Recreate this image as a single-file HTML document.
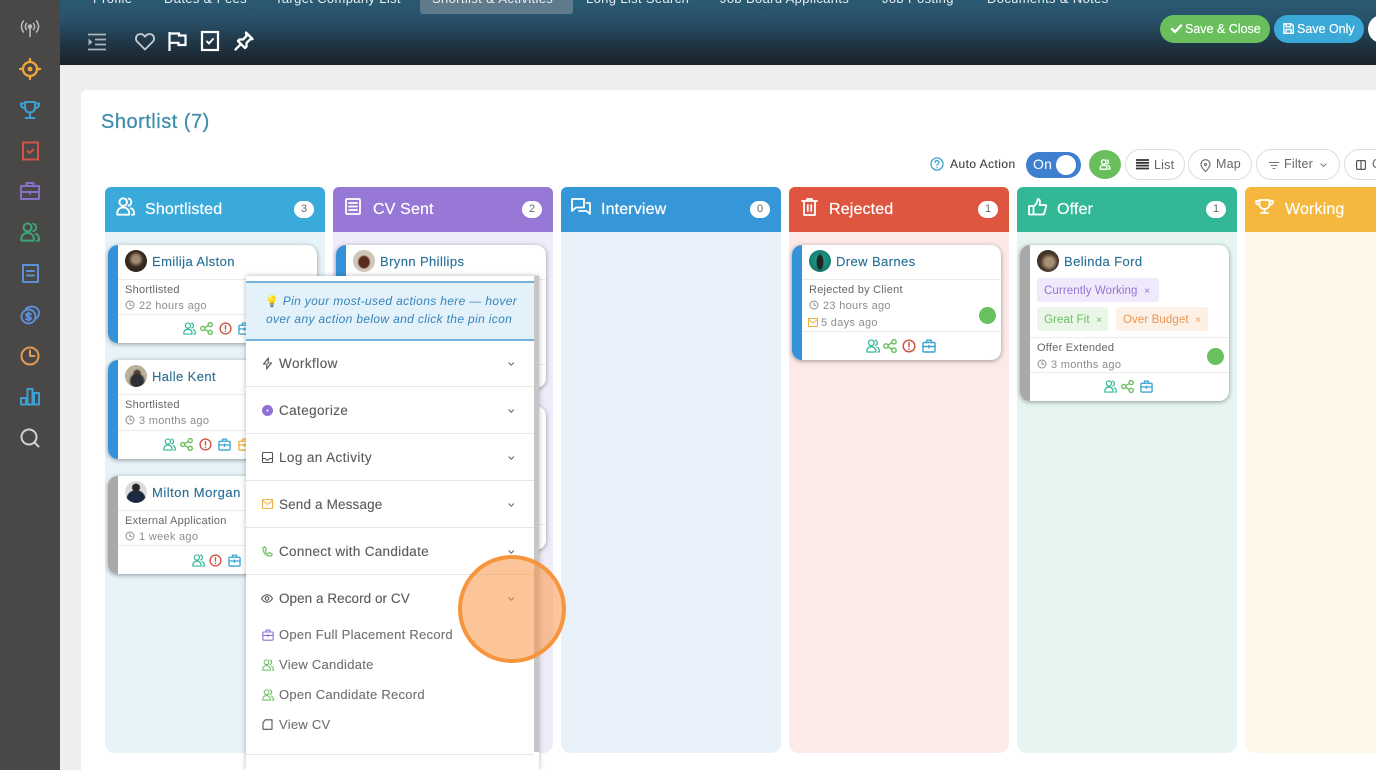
<!DOCTYPE html>
<html lang="en">
<head>
<meta charset="utf-8">
<title>Shortlist</title>
<style>
*{box-sizing:border-box}
html,body{margin:0;padding:0;width:1376px;height:770px;overflow:hidden;background:#eeeeee;font-family:"Liberation Sans",Arial,sans-serif;color:#555}
#wrap{position:relative;width:1376px;height:770px;overflow:hidden;background:#eee}
.a{position:absolute}
.t{position:absolute;white-space:nowrap}
svg{position:absolute;overflow:visible;fill:none;stroke-linecap:round;stroke-linejoin:round}
#side{left:0;top:0;width:60px;height:770px;background:#4a4846}
#top{left:60px;top:0;width:1316px;height:65px;background:linear-gradient(180deg,#2a5b73 0%,#28516a 30%,#1f3442 70%,#1b2229 100%)}
.tab{position:absolute;top:-9px;font-size:13px;letter-spacing:.35px;color:#e9eef1;white-space:nowrap;line-height:15px}
.btn{position:absolute;top:15px;height:28px;border-radius:14px;color:#fff;font-size:12.5px;line-height:28px;white-space:nowrap;-webkit-text-stroke:.15px #fff}
#panel{left:81px;top:90px;width:1295px;height:680px;background:#fff;border-radius:6px 0 0 0}
.pill{position:absolute;top:149px;height:31px;border:1px solid #dcdcdc;border-radius:16px;background:#fff;font-size:12.5px;line-height:28px;color:#666;letter-spacing:.2px}
.col{position:absolute;top:187px;width:220px;height:566px;border-radius:6px 6px 10px 10px;overflow:hidden}
.hd{position:absolute;left:0;top:0;width:100%;height:45px;color:#fff;font-size:16px;line-height:46px;letter-spacing:.15px;-webkit-text-stroke:.2px #fff}
.hd span.n{position:absolute;left:40px;top:0}
.bdg{position:absolute;top:14px;left:189px;width:20px;height:17px;border-radius:9px;background:#fff;color:#666;font-size:11px;line-height:17px;text-align:center;letter-spacing:0;-webkit-text-stroke:0}
.card{position:absolute;width:209px;background:#fff;border-radius:10px;box-shadow:0 1px 5px rgba(0,0,0,.38);overflow:hidden}
.bar{position:absolute;left:0;top:0;bottom:0;width:10px}
.av{position:absolute;left:17px;top:5px;width:22px;height:22px;border-radius:50%;overflow:hidden}
.nm{position:absolute;left:44px;top:7.500px;font-size:13px;line-height:18px;color:#2b7196;letter-spacing:.4px;white-space:nowrap;-webkit-text-stroke:.15px #2b7196}
.ln{position:absolute;left:10px;right:0;height:1px;background:#ececec}
.s1{position:absolute;left:17px;margin-top:1px;font-size:11px;line-height:14px;color:#666;letter-spacing:.25px;white-space:nowrap}
.s2{position:absolute;left:31px;margin-top:1px;font-size:11px;line-height:14px;color:#8d8d8d;letter-spacing:.3px;white-space:nowrap}
.dot{position:absolute;width:17px;height:17px;border-radius:50%;background:#68c05e}
.tag{position:absolute;height:24px;border-radius:3px;font-size:11.5px;line-height:26px;padding-left:7px;letter-spacing:.1px;white-space:nowrap}
#pop{left:246px;top:276px;width:293px;height:494px;background:#fff;box-shadow:0 0 5px rgba(0,0,0,.28)}
#tip{position:absolute;left:0;top:5px;width:288px;height:60px;background:#e3f1fb;border-top:2px solid #74b3d8;border-bottom:2px solid #74b3d8;color:#3584b8;font-style:italic;font-size:12px;letter-spacing:.35px;line-height:18px}
#sb{position:absolute;left:288px;top:0;width:5px;height:476px;background:#c6c6c6}
.dv{position:absolute;left:0;width:288px;height:1px;background:#e6e6e6}
.it{position:absolute;left:33px;margin-top:1px;font-size:13.5px;line-height:16px;color:#5a5a5a;letter-spacing:.25px;white-space:nowrap;-webkit-text-stroke:.12px #5a5a5a}
.sub{color:#6e6e6e;font-size:13px;letter-spacing:.27px;-webkit-text-stroke:.1px #6e6e6e}
#circ{left:458px;top:555px;width:108px;height:108px;border-radius:50%;border:4px solid #f7953c;background:rgba(250,150,70,.55)}
</style>
</head>
<body>
<div id="wrap">
<svg width="0" height="0" style="position:absolute">
<defs>
<symbol id="ppl" viewBox="0 0 14 14"><circle cx="5.300" cy="3.800" r="2.800"/><path d="M1 13c-.6-3 1.300-5.300 4.300-5.300S10.200 10 9.600 13z"/><path d="M9.300 1.200a2.700 2.700 0 0 1 0 5.200M11 8.300c1.700.7 2.500 2.500 2.200 4.700h-1.400"/></symbol>
<symbol id="shr" viewBox="0 0 14 14"><circle cx="3" cy="7" r="2.200"/><circle cx="11" cy="2.800" r="2.200"/><circle cx="11" cy="11.200" r="2.200"/><path d="M5 6l4-2.200M5 8l4 2.200"/></symbol>
<symbol id="exc" viewBox="0 0 14 14"><circle cx="7" cy="7" r="5.800"/><path d="M7 3.800v3.800M7 10v.2"/></symbol>
<symbol id="brf" viewBox="0 0 14 14"><rect x="1" y="3.500" width="12" height="9.500" rx="1"/><path d="M4.800 3.500V1.200h4.400v2.300M1 7.500h12M7 6.500v2.500"/></symbol>
<symbol id="clk" viewBox="0 0 10 10"><circle cx="5" cy="5" r="4"/><path d="M5 2.800V5l1.800.6"/></symbol>
<symbol id="chv" viewBox="0 0 8 5"><path d="M1 1l3 3 3-3"/></symbol>
</defs>
</svg>

<div id="top" class="a"></div>
<div class="a" style="left:420px;top:0;width:153px;height:14px;background:#5f7b8b;border-radius:0 0 3px 3px"></div>
<div class="tab" style="left:93px">Profile</div>
<div class="tab" style="left:164px">Dates &amp; Fees</div>
<div class="tab" style="left:275px">Target Company List</div>
<div class="tab" style="left:432px">Shortlist &amp; Activities</div>
<div class="tab" style="left:586px">Long List Search</div>
<div class="tab" style="left:720px">Job Board Applicants</div>
<div class="tab" style="left:882px">Job Posting</div>
<div class="tab" style="left:987px">Documents &amp; Notes</div>

<svg style="left:87px;top:33px" width="20" height="18" stroke="#aeb5b9" stroke-width="1.800"><path d="M1 1.500h18M8 6.500h11M8 11.500h11M1 16.500h18" stroke-linecap="butt"/><path d="M1.500 5.500l4 3.500-4 3.500z" fill="#aeb5b9" stroke="none"/></svg>
<svg style="left:135px;top:32px" width="20" height="19" stroke="#c9cdcf" stroke-width="1.800"><path d="M10 17.500L2.300 9.800C.2 7.700.7 4.300 2.800 2.800c2.300-1.600 5.400-.8 7.200 1.800 1.800-2.600 4.900-3.400 7.200-1.800 2.100 1.500 2.600 4.900.5 7z"/></svg>
<svg style="left:168px;top:32px" width="19" height="19" stroke="#fff" stroke-width="2.200"><path d="M1.500 0v19M1.500 1.500h9.500v2h6.500v9.500h-7v-2.200H1.500" stroke-linecap="butt" stroke-linejoin="miter"/></svg>
<svg style="left:201px;top:31px" width="18" height="20" stroke="#fff" stroke-width="2.200"><rect x="1" y="1" width="16" height="18" stroke-linejoin="miter"/><path d="M6 10.500l2 2 4-4.500" stroke-width="2"/></svg>
<svg style="left:234px;top:31px" width="20" height="20" stroke="#fff" stroke-width="2.300"><path d="M12 1.500l6.500 6.500-2.500.5-3.500 3.500v3.500l-1.500 1.500-7-7 1.500-1.500h3.500l3.500-3.500z"/><path d="M6.500 13.500l-5 5"/></svg>

<div class="btn" style="left:1160px;width:110px;background:#68bf5c;padding-left:25px">Save &amp; Close</div>
<svg style="left:1171px;top:24px" width="11" height="10" stroke="#fff" stroke-width="2.400"><path d="M1 5l3 3 6-6.500"/></svg>
<div class="btn" style="left:1274px;width:90px;background:#3aa9d8;padding-left:23px">Save Only</div>
<svg style="left:1283px;top:23px" width="11" height="11" stroke="#fff" stroke-width="1.400"><path d="M.8.800h7.500l2 2v7.500H.8zM3 .8v3h4.500v-3M3 10.300V6.500h5v3.800"/></svg>
<div class="a" style="left:1368px;top:15px;width:28px;height:28px;border-radius:50%;background:#fff"></div>

<div id="panel" class="a"></div>
<div class="t" style="left:101px;top:110px;font-size:20px;line-height:25px;color:#3d8cab;letter-spacing:.5px;-webkit-text-stroke:.25px #3d8cab">Shortlist (7)</div>

<!-- sidebar -->
<div id="side" class="a"></div>
<svg style="left:20px;top:19px" width="20" height="19" stroke="#b9b9b9" stroke-width="1.600"><circle cx="10" cy="7.500" r="1.500" fill="#b9b9b9"/><path d="M10 9v8.500M6.500 4.500a4.500 4.500 0 0 0 0 6M13.500 4.500a4.500 4.500 0 0 1 0 6M3.500 2a8.500 8.500 0 0 0 0 11M16.500 2a8.500 8.500 0 0 1 0 11"/></svg>
<svg style="left:20px;top:59px" width="20" height="20" stroke="#efa93a" stroke-width="2.300"><circle cx="10" cy="10" r="7"/><circle cx="10" cy="10" r="2.400" fill="#efa93a" stroke="none"/><path d="M10 0v3M10 17v3M0 10h3M17 10h3"/></svg>
<svg style="left:20px;top:101px" width="20" height="18" stroke="#3e9fd3" stroke-width="2"><path d="M5 1h10v5.500c0 3-2.200 5-5 5s-5-2-5-5zM5 2.500H.8c0 3 1.500 4.500 4.200 4.800M15 2.500h4.200c0 3-1.500 4.500-4.200 4.800M10 11.500v5M5.500 17h9"/></svg>
<svg style="left:22px;top:141px" width="17" height="20" stroke="#cf5444" stroke-width="2"><rect x="1" y="1.500" width="15" height="17" stroke-linejoin="miter"/><path d="M5.500 10l2 2 4-3.500"/></svg>
<svg style="left:20px;top:182px" width="20" height="18" stroke="#8a6fc9" stroke-width="2"><rect x="1" y="4" width="18" height="13"/><path d="M6.500 4V1h7v3M1 10h18M10 9.500v2"/></svg>
<svg style="left:20px;top:222px" width="20" height="20" stroke="#3ea57a" stroke-width="1.400"><use href="#ppl" width="20" height="20"/></svg>
<svg style="left:22px;top:264px" width="17" height="19" stroke="#5b8fd6" stroke-width="2"><rect x="1" y="1" width="15" height="17"/><path d="M5 7h7M5 11.500h7"/></svg>
<svg style="left:20px;top:305px" width="20" height="20" stroke="#5b8fd6" stroke-width="1.900"><circle cx="8.500" cy="11.500" r="7"/><path d="M6 3.500C10 .5 15.500 1 18 4.500c2 3 1 7-2 9"/><path d="M11 9.500c-1-1.300-4.800-1.300-4.800.6 0 2.300 4.800 1 4.800 3.300 0 1.700-3.700 1.700-5 .5M8.500 7.500v8"/></svg>
<svg style="left:20px;top:346px" width="20" height="20" stroke="#e39a55" stroke-width="2"><circle cx="10" cy="10" r="8.500"/><path d="M10 4.500V10h4.500"/></svg>
<svg style="left:20px;top:388px" width="20" height="18" stroke="#3e9fd3" stroke-width="2" stroke-linejoin="miter"><rect x="1" y="10" width="5" height="6.500"/><rect x="7.500" y="1" width="5" height="15.500"/><rect x="14" y="5" width="5" height="11.500"/></svg>
<svg style="left:20px;top:428px" width="20" height="20" stroke="#d2d2d2" stroke-width="2"><circle cx="9" cy="9" r="7.500"/><path d="M14.500 14.500l4 4"/></svg>

<!-- toolbar -->
<svg style="left:930px;top:157px" width="14" height="14" stroke="#3fa3c8" stroke-width="1.300"><circle cx="7" cy="7" r="6"/><path d="M5 5.500c0-2.700 4-2.500 4 0 0 1.500-2 1.500-2 3M7 10.500v.1"/></svg>
<div class="t" style="left:950px;top:156px;font-size:12px;line-height:16px;color:#3c3c3c;letter-spacing:.45px;-webkit-text-stroke:.1px #3c3c3c">Auto Action</div>
<div class="a" style="left:1026px;top:152px;width:55px;height:26px;border-radius:13px;background:#3f7fd0"></div>
<div class="t" style="left:1033px;top:155px;font-size:14px;line-height:18px;color:#fff;letter-spacing:.2px">On</div>
<div class="a" style="left:1056px;top:155px;width:20px;height:20px;border-radius:50%;background:#fff"></div>
<div class="a" style="left:1089px;top:150px;width:32px;height:29px;border-radius:50%;background:#68bf5c"></div>
<svg style="left:1099px;top:159px" width="12" height="11" stroke="#fff" stroke-width="1.700"><use href="#ppl" width="12" height="11"/></svg>
<div class="pill" style="left:1125px;width:60px;padding-left:28px;line-height:30px">List</div>
<svg style="left:1136px;top:159px" width="13" height="11" stroke="#333" stroke-width="1.800"><path d="M0 1h13M0 3.800h13M0 6.600h13M0 9.500h13" stroke-linecap="butt"/></svg>
<div class="pill" style="left:1188px;width:64px;padding-left:27px">Map</div>
<svg style="left:1200px;top:159px" width="11" height="13" stroke="#666" stroke-width="1.100"><path d="M5.500 12.500C2.500 9.500 1 7.500 1 5.200a4.500 4.500 0 0 1 9 0c0 2.300-1.500 4.300-4.500 7.300z"/><circle cx="5.500" cy="5.500" r="1"/></svg>
<div class="pill" style="left:1256px;width:84px;padding-left:27px">Filter</div>
<svg style="left:1269px;top:162px" width="10" height="7" stroke="#777" stroke-width="1"><path d="M0 .5h10M2 3.500h6M4 6.500h2"/></svg>
<svg style="left:1320px;top:163px" width="7" height="4.500" stroke="#777" stroke-width="1.200"><use href="#chv" width="7" height="4.500"/></svg>
<div class="pill" style="left:1344px;width:80px;padding-left:27px">Columns</div>
<svg style="left:1356px;top:160px" width="10" height="10" stroke="#555" stroke-width="1.200"><rect x=".6" y=".6" width="8.800" height="8.800" rx="1"/><path d="M5 .6v8.800"/></svg>

<!-- Shortlisted -->
<div class="col" style="left:105px;background:#e6f3f9"><div class="hd" style="background:#3aaadb"><span class="n">Shortlisted</span><span class="bdg">3</span></div></div>
<svg style="left:116px;top:197px" width="19" height="19" stroke="#fff" stroke-width="1.400"><use href="#ppl" width="19" height="19"/></svg>
<!-- CV Sent -->
<div class="col" style="left:333px;background:#f0ebf9"><div class="hd" style="background:#9878d6"><span class="n">CV Sent</span><span class="bdg">2</span></div></div>
<svg style="left:345px;top:198px" width="16" height="17" stroke="#fff" stroke-width="1.800"><rect x="1" y="1" width="14" height="15" rx="1"/><path d="M4 5h8M4 8.500h8M4 12h8"/></svg>
<!-- Interview -->
<div class="col" style="left:561px;background:#e8f1fa"><div class="hd" style="background:#3597d8"><span class="n">Interview</span><span class="bdg">0</span></div></div>
<svg style="left:571px;top:198px" width="20" height="17" stroke="#fff" stroke-width="1.800"><path d="M1 1h12v8.500H5L1 13zM15.500 5H19v11l-3.500-3H8"/></svg>
<!-- Rejected -->
<div class="col" style="left:789px;background:#fbeae7"><div class="hd" style="background:#de5540"><span class="n">Rejected</span><span class="bdg">1</span></div></div>
<svg style="left:801px;top:198px" width="17" height="18" stroke="#fff" stroke-width="1.800"><path d="M1 3h15M6 3V1h5v2M3 3v14h11V3M6.800 7v6M10.200 7v6"/></svg>
<!-- Offer -->
<div class="col" style="left:1017px;background:#e6f5f1"><div class="hd" style="background:#33b897"><span class="n">Offer</span><span class="bdg">1</span></div></div>
<svg style="left:1028px;top:198px" width="19" height="18" stroke="#fff" stroke-width="1.800"><path d="M5.500 8H1v8.500h4.500zM5.500 8.500C8 6.500 9.500 4 9.800 1c2.200 0 2.700 2.500 1.700 6h6c1 0 .8 1.500.3 2.500l-1.600 6c-.3.800-1 1-1.700 1H5.500"/></svg>
<!-- Working -->
<div class="col" style="left:1245px;width:240px;background:#fef6e7"><div class="hd" style="background:#f6b73f"><span class="n">Working</span></div></div>
<svg style="left:1255px;top:199px" width="19" height="15" stroke="#fff" stroke-width="1.800"><path d="M4.500 1h10v4c0 3-2 5-5 5s-5-2-5-5zM4.500 2H1c0 2.500 1.300 3.800 3.700 4M14.500 2H18c0 2.500-1.300 3.800-3.700 4M9.500 10v3.500M6 14h7"/></svg>

<!-- Shortlisted cards -->
<div class="card" style="left:108px;top:245px;height:98px"><div class="bar" style="background:#3592d8"></div>
<div class="av" style="background:radial-gradient(circle at 50% 42%,#a08a74 0 22%,#3a2c20 45%,#201810 100%)"></div><div class="nm">Emilija Alston</div>
<div class="ln" style="top:34px"></div><div class="s1" style="top:37px">Shortlisted</div>
<svg style="left:17px;top:55px" width="10" height="10" stroke="#8f8f8f" stroke-width="1"><use href="#clk" width="10" height="10"/></svg>
<div class="s2" style="top:53px">22 hours ago</div><div class="ln" style="top:69px"></div></div>
<svg style="left:183px;top:322px" width="13" height="13" stroke="#35b79a" stroke-width="1.300"><use href="#ppl" width="13" height="13"/></svg>
<svg style="left:200px;top:322px" width="13" height="13" stroke="#68bf5c" stroke-width="1.500"><use href="#shr" width="13" height="13"/></svg>
<svg style="left:219px;top:322px" width="13" height="13" stroke="#cf5444" stroke-width="1.500"><use href="#exc" width="13" height="13"/></svg>
<svg style="left:238px;top:322px" width="13" height="13" stroke="#3aa4cf" stroke-width="1.400"><use href="#brf" width="13" height="13"/></svg>

<div class="card" style="left:108px;top:360px;height:99px"><div class="bar" style="background:#3592d8"></div>
<div class="av" style="background:radial-gradient(circle at 55% 72%,#2e3036 0 30%,transparent 42%),radial-gradient(circle at 55% 38%,#5a4034 0 16%,transparent 24%),#b8b09a"></div><div class="nm">Halle Kent</div>
<div class="ln" style="top:34px"></div><div class="s1" style="top:37px">Shortlisted</div>
<svg style="left:17px;top:55px" width="10" height="10" stroke="#8f8f8f" stroke-width="1"><use href="#clk" width="10" height="10"/></svg>
<div class="s2" style="top:53px">3 months ago</div><div class="ln" style="top:70px"></div></div>
<svg style="left:163px;top:438px" width="13" height="13" stroke="#35b79a" stroke-width="1.300"><use href="#ppl" width="13" height="13"/></svg>
<svg style="left:180px;top:438px" width="13" height="13" stroke="#68bf5c" stroke-width="1.500"><use href="#shr" width="13" height="13"/></svg>
<svg style="left:199px;top:438px" width="13" height="13" stroke="#cf5444" stroke-width="1.500"><use href="#exc" width="13" height="13"/></svg>
<svg style="left:218px;top:438px" width="13" height="13" stroke="#3aa4cf" stroke-width="1.400"><use href="#brf" width="13" height="13"/></svg>
<svg style="left:238px;top:438px" width="13" height="13" stroke="#efb042" stroke-width="1.400"><use href="#brf" width="13" height="13"/></svg>

<div class="card" style="left:108px;top:476px;height:98px"><div class="bar" style="background:#a9a9a9"></div>
<div class="av" style="background:radial-gradient(circle at 50% 85%,#1c2a40 0 42%,transparent 46%),radial-gradient(circle at 50% 30%,#2a2320 0 18%,transparent 24%),#dcdcdc"></div><div class="nm" style="letter-spacing:.5px">Milton Morgan</div>
<div class="ln" style="top:34px"></div><div class="s1" style="top:37px">External Application</div>
<svg style="left:17px;top:55px" width="10" height="10" stroke="#8f8f8f" stroke-width="1"><use href="#clk" width="10" height="10"/></svg>
<div class="s2" style="top:53px">1 week ago</div><div class="ln" style="top:69px"></div></div>
<svg style="left:192px;top:554px" width="13" height="13" stroke="#35b79a" stroke-width="1.300"><use href="#ppl" width="13" height="13"/></svg>
<svg style="left:209px;top:554px" width="13" height="13" stroke="#cf5444" stroke-width="1.500"><use href="#exc" width="13" height="13"/></svg>
<svg style="left:228px;top:554px" width="13" height="13" stroke="#3aa4cf" stroke-width="1.400"><use href="#brf" width="13" height="13"/></svg>

<!-- CV Sent cards -->
<div class="card" style="left:336px;top:245px;height:143px;width:210px"><div class="bar" style="background:#3592d8"></div>
<div class="av" style="background:radial-gradient(ellipse at 50% 55%,#5a2c20 0 32%,transparent 42%),#cfc6b8"></div><div class="nm">Brynn Phillips</div>
<div class="ln" style="top:34px"></div><div class="dot" style="left:186px;top:92px"></div><div class="ln" style="top:119px"></div></div>
<div class="card" style="left:336px;top:406px;height:144px;width:210px"><div class="bar" style="background:#3592d8"></div>
<div class="dot" style="left:186px;top:92px"></div><div class="ln" style="top:118px"></div></div>

<!-- Rejected card -->
<div class="card" style="left:792px;top:245px;height:115px"><div class="bar" style="background:#3592d8"></div>
<div class="av" style="background:radial-gradient(ellipse 4px 9px at 50% 55%,#222 0 70%,transparent 100%),radial-gradient(circle at 50% 45%,#1fa28f,#12695f)"></div><div class="nm">Drew Barnes</div>
<div class="ln" style="top:34px"></div><div class="s1" style="top:37px">Rejected by Client</div>
<svg style="left:17px;top:55px" width="10" height="10" stroke="#8f8f8f" stroke-width="1"><use href="#clk" width="10" height="10"/></svg>
<div class="s2" style="top:53px">23 hours ago</div>
<svg style="left:16px;top:73px" width="10" height="9" stroke="#efb042" stroke-width="1"><rect x=".5" y=".5" width="9" height="8"/><path d="M.5 1.500L5 5l4.500-3.500"/></svg>
<div class="s2" style="top:70px;left:29px">5 days ago</div>
<div class="dot" style="left:187px;top:62px"></div>
<div class="ln" style="top:86px"></div></div>
<svg style="left:866px;top:338.500px" width="14" height="14" stroke="#35b79a" stroke-width="1.300"><use href="#ppl" width="14" height="14"/></svg>
<svg style="left:883px;top:338.500px" width="14" height="14" stroke="#68bf5c" stroke-width="1.400"><use href="#shr" width="14" height="14"/></svg>
<svg style="left:902px;top:338.500px" width="14" height="14" stroke="#cf5444" stroke-width="1.500"><use href="#exc" width="14" height="14"/></svg>
<svg style="left:922px;top:338.500px" width="14" height="14" stroke="#3aa4cf" stroke-width="1.400"><use href="#brf" width="14" height="14"/></svg>

<!-- Offer card -->
<div class="card" style="left:1020px;top:245px;height:156px"><div class="bar" style="background:#a9a9a9"></div>
<div class="av" style="background:radial-gradient(circle at 55% 55%,#a89078 0 25%,#4a3a2c 50%,#241a14 100%)"></div><div class="nm">Belinda Ford</div>
<div class="tag" style="left:17px;top:33px;width:122px;background:#f0e8fb;color:#9374d2">Currently Working&nbsp; <span style="font-size:10px">×</span></div>
<div class="tag" style="left:17px;top:62px;width:71px;background:#eaf6e8;color:#6dbd62">Great Fit&nbsp; <span style="font-size:10px">×</span></div>
<div class="tag" style="left:96px;top:62px;width:92px;background:#fdf1e6;color:#ec9550">Over Budget&nbsp; <span style="font-size:10px">×</span></div>
<div class="ln" style="top:92px"></div><div class="s1" style="top:95px">Offer Extended</div>
<svg style="left:17px;top:114px" width="10" height="10" stroke="#8f8f8f" stroke-width="1"><use href="#clk" width="10" height="10"/></svg>
<div class="s2" style="top:112px">3 months ago</div>
<div class="dot" style="left:187px;top:103px"></div>
<div class="ln" style="top:127px"></div></div>
<svg style="left:1104px;top:380px" width="13" height="13" stroke="#35b79a" stroke-width="1.300"><use href="#ppl" width="13" height="13"/></svg>
<svg style="left:1121px;top:380px" width="13" height="13" stroke="#68bf5c" stroke-width="1.500"><use href="#shr" width="13" height="13"/></svg>
<svg style="left:1140px;top:380px" width="13" height="13" stroke="#3aa4cf" stroke-width="1.400"><use href="#brf" width="13" height="13"/></svg>

<!-- Popup -->
<div id="pop" class="a">
<div id="tip"><div class="t" style="left:19px;top:9px"><span style="font-style:normal;font-size:11px;color:#f0c040">&#128161;</span> Pin your most-used actions here — hover</div><div class="t" style="left:20px;top:27px">over any action below and click the pin icon</div></div>
<div id="sb"></div>
<div class="it" style="top:79px;letter-spacing:.45px">Workflow</div><div class="dv" style="top:110px"></div>
<div class="it" style="top:126px;letter-spacing:.4px">Categorize</div><div class="dv" style="top:157px"></div>
<div class="it" style="top:173px;letter-spacing:.4px">Log an Activity</div><div class="dv" style="top:204px"></div>
<div class="it" style="top:220px;letter-spacing:.15px">Send a Message</div><div class="dv" style="top:251px"></div>
<div class="it" style="top:267px;letter-spacing:.3px">Connect with Candidate</div><div class="dv" style="top:298px"></div>
<div class="it" style="top:314px;letter-spacing:.05px">Open a Record or CV</div>
<div class="it sub" style="top:350px">Open Full Placement Record</div>
<div class="it sub" style="top:380px">View Candidate</div>
<div class="it sub" style="top:410px">Open Candidate Record</div>
<div class="it sub" style="top:440px">View CV</div>
<div class="dv" style="top:478px"></div>
<svg style="left:16px;top:81px" width="11" height="13" stroke="#555" stroke-width="1.100"><path d="M6.500 1L1.500 7h3.500l-.5 5 5-6H6z"/></svg>
<svg style="left:16px;top:129px" width="11" height="11"><circle cx="5.500" cy="5.500" r="5.500" fill="#9070d6"/><circle cx="5.500" cy="5.500" r="1" fill="#fff"/></svg>
<svg style="left:16px;top:176px" width="11" height="11" stroke="#555" stroke-width="1.100"><rect x=".5" y=".5" width="10" height="10" rx="1"/><path d="M.5 6.500h3l1 1.500h2l1-1.500h3"/></svg>
<svg style="left:16px;top:223px" width="11" height="10" stroke="#efb042" stroke-width="1.100"><rect x=".5" y=".5" width="10" height="9"/><path d="M.5 1.500L5.500 5.500l5-4"/></svg>
<svg style="left:16px;top:270px" width="11" height="11" stroke="#68bf5c" stroke-width="1.100"><path d="M1 1.500L3 .8l1.500 2.700L3.200 4.800c.6 1.500 1.500 2.400 3 3l1.300-1.300 2.700 1.500-.7 2C4 10.500.5 6.500 1 1.500z"/></svg>
<svg style="left:15px;top:318px" width="12" height="9" stroke="#555" stroke-width="1.100"><path d="M.5 4.500C3.500-.5 8.500-.5 11.500 4.500 8.500 9.500 3.500 9.500.5 4.500z"/><circle cx="6" cy="4.500" r="1.800"/></svg>
<svg style="left:16px;top:353px" width="12" height="12" stroke="#9070d6" stroke-width="1.300"><use href="#brf" width="12" height="12"/></svg>
<svg style="left:16px;top:383px" width="12" height="12" stroke="#68bf5c" stroke-width="1.200"><use href="#ppl" width="12" height="12"/></svg>
<svg style="left:16px;top:413px" width="12" height="12" stroke="#68bf5c" stroke-width="1.200"><use href="#ppl" width="12" height="12"/></svg>
<svg style="left:16px;top:443px" width="11" height="11" stroke="#555" stroke-width="1.100"><path d="M3.500.8H10v9.500H1V3.500z"/></svg>
<svg style="left:262px;top:86px" width="6.500" height="4" stroke="#666" stroke-width="1.300"><use href="#chv" width="6.500" height="4"/></svg>
<svg style="left:262px;top:133px" width="6.500" height="4" stroke="#666" stroke-width="1.300"><use href="#chv" width="6.500" height="4"/></svg>
<svg style="left:262px;top:180px" width="6.500" height="4" stroke="#666" stroke-width="1.300"><use href="#chv" width="6.500" height="4"/></svg>
<svg style="left:262px;top:227px" width="6.500" height="4" stroke="#666" stroke-width="1.300"><use href="#chv" width="6.500" height="4"/></svg>
<svg style="left:262px;top:274px" width="6.500" height="4" stroke="#666" stroke-width="1.300"><use href="#chv" width="6.500" height="4"/></svg>
<svg style="left:262px;top:321px" width="6.500" height="4" stroke="#666" stroke-width="1.300"><use href="#chv" width="6.500" height="4"/></svg>
</div>
<div id="circ" class="a"></div>
</div>
</body>
</html>
